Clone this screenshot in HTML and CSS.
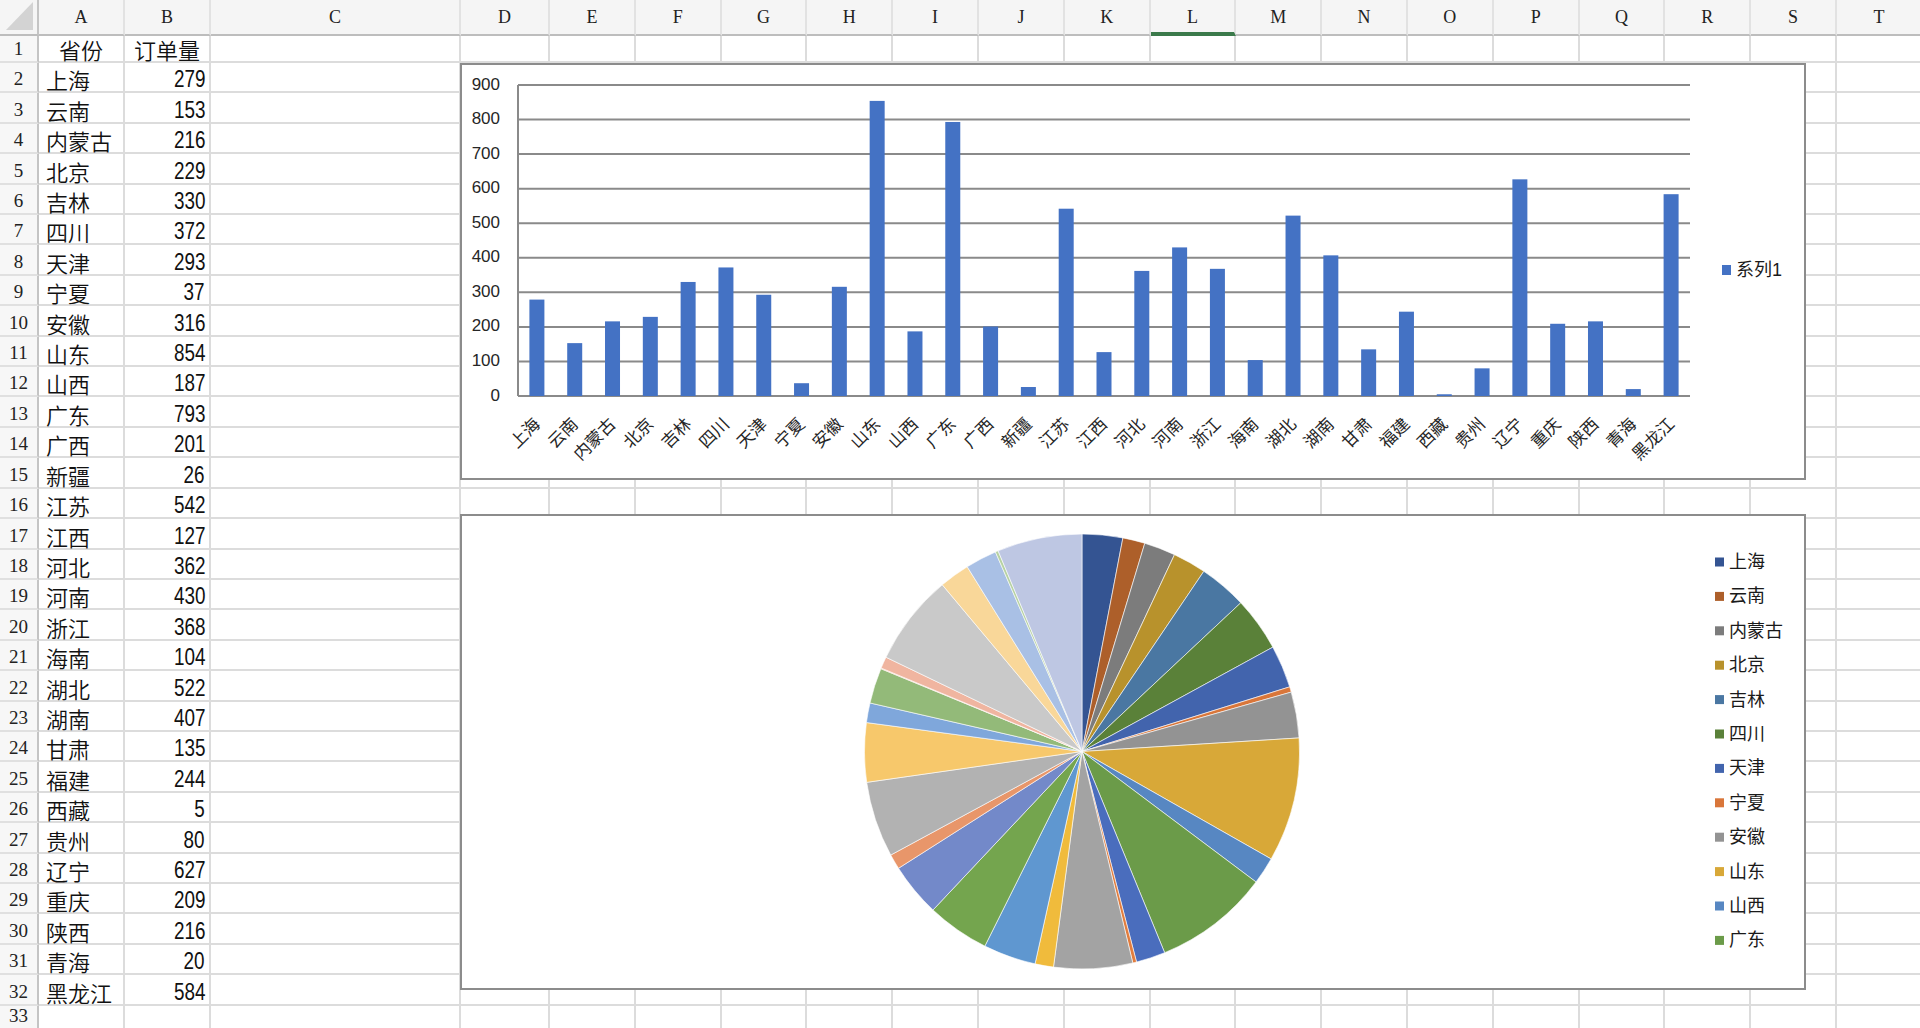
FILE: index.html
```html
<!DOCTYPE html>
<html lang="zh-CN">

<head>
    <meta charset="UTF-8">
    <meta name="viewport" content="width=device-width, initial-scale=1.0">
    <title>各省订单量</title>
    <link rel="stylesheet" href="styles.css">
</head>

<body>

    <div class="sheet" id="sheet"></div>

    <div class="chart bar-chart">
        <svg id="barChart" width="1342" height="413"></svg>
    </div>

    <div class="chart pie-chart">
        <svg id="pieChart" width="1342" height="472"></svg>
    </div>

    <script>
        const orders = [
            ['上海', 279], ['云南', 153], ['内蒙古', 216], ['北京', 229], ['吉林', 330],
            ['四川', 372], ['天津', 293], ['宁夏', 37], ['安徽', 316], ['山东', 854],
            ['山西', 187], ['广东', 793], ['广西', 201], ['新疆', 26], ['江苏', 542],
            ['江西', 127], ['河北', 362], ['河南', 430], ['浙江', 368], ['海南', 104],
            ['湖北', 522], ['湖南', 407], ['甘肃', 135], ['福建', 244], ['西藏', 5],
            ['贵州', 80], ['辽宁', 627], ['重庆', 209], ['陕西', 216], ['青海', 20],
            ['黑龙江', 584]
        ];

        // slice colours, same order as the rows
        const pieColors = [
            '#345492', '#ad5f2a', '#7c7c7c', '#b8922c', '#4a77a2', '#5a8139',
            '#4264ad', '#d9763a', '#939393', '#d8a838', '#5787c2', '#6b9b49',
            '#4a6dbd', '#e27d3e', '#a3a3a3', '#f0bb3c', '#5f97d0', '#74a54e',
            '#7389c9', '#e8966a', '#b2b2b2', '#f7c86b', '#7fa7db', '#93ba79',
            '#f2a98a', '#f0b5a0', '#c9c9c9', '#f9d799', '#a9c0e5', '#b7d2a3',
            '#bec7e3'
        ];

        // Build the worksheet grid
        const letters = 'ABCDEFGHIJKLMNOPQRST'.split('');
        let cells = '<div class="cell corner"></div>';
        letters.forEach(l => {
            cells += `<div class="cell col-head${l === 'L' ? ' active' : ''}">${l}</div>`;
        });

        for (let r = 1; r <= 33; r++) {
            cells += `<div class="cell row-head">${r}</div>`;
            if (r === 1) {
                cells += '<div class="cell title">省份</div><div class="cell title">订单量</div>';
            } else if (orders[r - 2]) {
                const [name, count] = orders[r - 2];
                cells += `<div class="cell name">${name}</div><div class="cell num"><span>${count}</span></div>`;
            } else {
                cells += '<div class="cell"></div><div class="cell"></div>';
            }
            for (let c = 2; c < letters.length; c++) {
                cells += '<div class="cell"></div>';
            }
        }
        document.getElementById('sheet').innerHTML = cells;

        // Column chart
        const plot = { left: 56, right: 1228, top: 20, bottom: 331, max: 900 };
        const plotH = plot.bottom - plot.top;
        const step = (plot.right - plot.left) / orders.length;
        let bars = '';

        for (let v = 0; v <= plot.max; v += 100) {
            const y = plot.bottom - v / plot.max * plotH;
            bars += `<line class="grid" x1="${plot.left}" x2="${plot.right}" y1="${y}" y2="${y}"/>`;
            bars += `<text class="tick" x="38" y="${y - 1}">${v}</text>`;
        }
        bars += `<line class="grid" x1="${plot.left}" x2="${plot.left}" y1="${plot.top}" y2="${plot.bottom}"/>`;

        orders.forEach(([name, count], i) => {
            const cx = plot.left + step * (i + 0.5);
            const h = count / plot.max * plotH;
            bars += `<rect class="bar" x="${cx - 7.5}" y="${plot.bottom - h}" width="15" height="${h}"/>`;
            bars += `<text class="cat" transform="translate(${cx - 1} 355) rotate(-45)">${name}</text>`;
        });

        bars += '<rect class="bar" x="1260" y="200" width="9" height="10"/>';
        bars += '<text class="legend" x="1274" y="205">系列1</text>';
        document.getElementById('barChart').innerHTML = bars;

        // Pie chart
        const total = orders.reduce((sum, o) => sum + o[1], 0);
        const pie = { cx: 620, cy: 235.5, r: 217.5 };
        let slices = '';
        let start = -Math.PI / 2;

        orders.forEach(([name, count], i) => {
            const end = start + count / total * Math.PI * 2;
            const x1 = pie.cx + pie.r * Math.cos(start);
            const y1 = pie.cy + pie.r * Math.sin(start);
            const x2 = pie.cx + pie.r * Math.cos(end);
            const y2 = pie.cy + pie.r * Math.sin(end);
            const large = end - start > Math.PI ? 1 : 0;
            slices += `<path class="slice" fill="${pieColors[i]}" d="M${pie.cx} ${pie.cy} L${x1} ${y1} A${pie.r} ${pie.r} 0 ${large} 1 ${x2} ${y2} Z"/>`;
            start = end;
        });

        orders.slice(0, 12).forEach(([name], i) => {
            const y = 46 + i * 34.4;
            slices += `<rect x="1253" y="${y - 4.5}" width="9" height="9" fill="${pieColors[i]}"/>`;
            slices += `<text class="legend" x="1267" y="${y}">${name}</text>`;
        });
        document.getElementById('pieChart').innerHTML = slices;
    </script>

</body>

</html>
```

FILE: styles.css
```css
body {
    margin: 0;
    background-color: #fff;
    font-family: "Noto Sans CJK SC", sans-serif;
    overflow: hidden;
    position: relative;
}

.sheet {
    display: grid;
    grid-template-columns: 39px 86px 86px 250px 89px repeat(15, 85.8px) 86px;
    grid-template-rows: 36px 27px repeat(31, 30.42px) 24px;
}

.cell {
    box-sizing: border-box;
    border-right: 2px solid #dcdcdc;
    border-bottom: 2px solid #dcdcdc;
    display: flex;
    align-items: flex-end;
    white-space: nowrap;
    color: #111;
}

.corner {
    background-color: #f5f5f5;
    border-right-color: #c4c4c4;
    border-bottom-color: #bdbdbd;
    justify-content: flex-end;
    padding: 0 4px 4px 0;
}

.corner::after {
    content: "";
    width: 27px;
    height: 28px;
    background-color: #d3d3d3;
    clip-path: polygon(100% 0, 100% 100%, 0 100%);
}

.col-head {
    background-color: #f5f5f5;
    border-right-color: #e2e2e2;
    border-bottom-color: #bdbdbd;
    align-items: center;
    justify-content: center;
    font-family: "Liberation Serif", serif;
    font-size: 18px;
    color: #222;
}

.col-head.active {
    border-bottom: 4px solid #3b7a4b;
    padding-top: 2px;
}

.row-head {
    background-color: #f7f7f7;
    border-right-color: #c4c4c4;
    border-bottom-color: #e0e0e0;
    justify-content: center;
    font-family: "Liberation Serif", serif;
    font-size: 19px;
    line-height: 24px;
    color: #222;
}

.title,
.name {
    font-size: 22px;
    line-height: 24px;
    font-weight: 350;
}

.title {
    justify-content: center;
}

.name {
    padding-left: 7px;
}

.num {
    justify-content: flex-end;
    padding-right: 4px;
    font-family: "Liberation Sans", sans-serif;
    font-size: 23px;
    line-height: 24px;
}

/* narrow figures, like the sheet's condensed number font */
.num span {
    display: inline-block;
    transform: scaleX(0.82);
    transform-origin: right bottom;
}

/* charts float over the grid */
.chart {
    position: absolute;
    left: 460px;
    width: 1346px;
    box-sizing: border-box;
    border: 2px solid #8c8c8c;
    background-color: #fff;
}

.chart svg {
    display: block;
}

.bar-chart {
    top: 63px;
    height: 417px;
}

.pie-chart {
    top: 514px;
    height: 476px;
}

.grid {
    stroke: #8a8a8a;
    stroke-width: 2;
}

.bar {
    fill: #4472c4;
}

.tick {
    font-family: "Liberation Sans", sans-serif;
    font-size: 17px;
    fill: #262626;
    text-anchor: end;
    dominant-baseline: central;
}

.cat {
    font-family: "Noto Sans CJK SC", sans-serif;
    font-size: 17px;
    fill: #262626;
    text-anchor: end;
    dominant-baseline: central;
}

.legend {
    font-family: "Liberation Sans", "Noto Sans CJK SC", sans-serif;
    font-size: 18px;
    fill: #1a1a1a;
    dominant-baseline: central;
}

.slice {
    stroke: #fff;
    stroke-width: 0.6;
}
```
